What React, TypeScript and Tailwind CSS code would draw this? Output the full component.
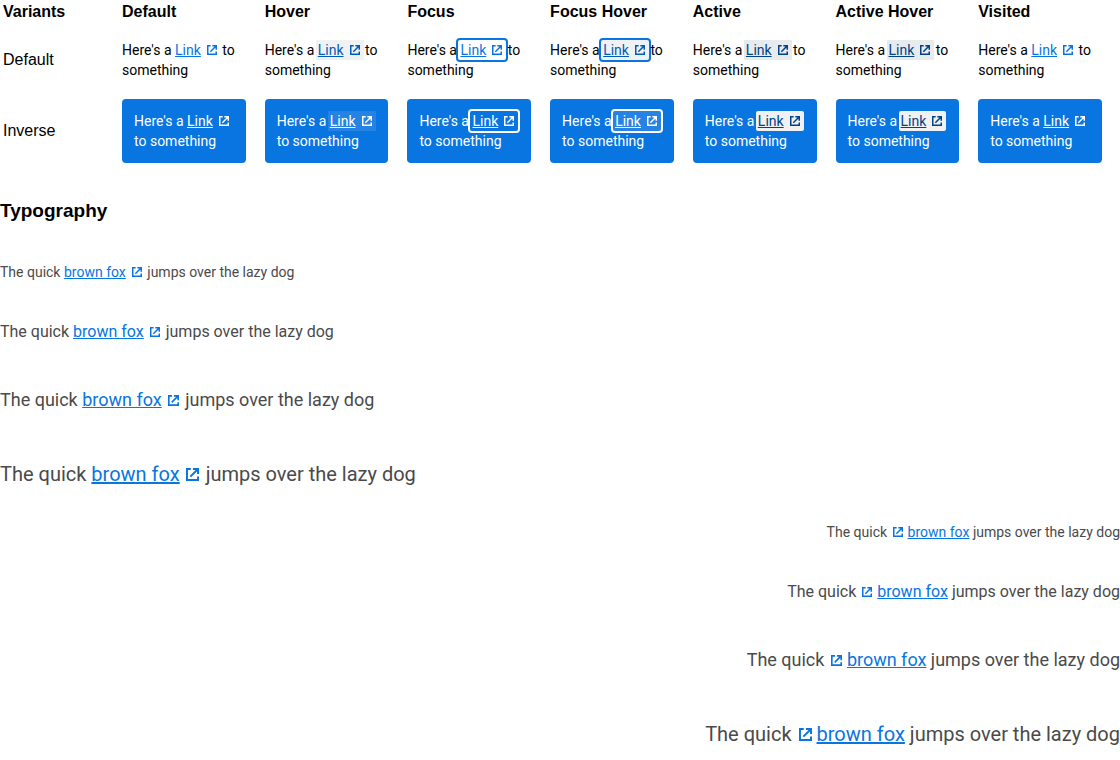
import clsx from 'clsx'

const states = [
  {
    name: 'Default',
    link: 'text-[#0875e1]',
    inverse: 'text-white',
  },
  {
    name: 'Hover',
    link: 'bg-[#f0f1f2] text-[#005cb9]',
    inverse: 'bg-[#2683e4] text-white',
  },
  {
    name: 'Focus',
    link: 'rounded-xs text-[#0875e1] ring-2 ring-[#0875e1]',
    inverse: 'rounded-xs text-white ring-2 ring-white',
  },
  {
    name: 'Focus Hover',
    link: 'rounded-xs bg-[#f0f1f2] text-[#005cb9] ring-2 ring-[#0875e1]',
    inverse: 'rounded-xs bg-[#2683e4] text-white ring-2 ring-white',
  },
  {
    name: 'Active',
    link: 'bg-[#e8ebed] text-[#004387]',
    inverse: 'rounded-xs bg-[#f0f1f2] text-[#004387]',
  },
  {
    name: 'Active Hover',
    link: 'bg-[#e8ebed] text-[#004387]',
    inverse: 'rounded-xs bg-[#f0f1f2] text-[#004387]',
  },
  {
    name: 'Visited',
    link: 'text-[#0875e1]',
    inverse: 'text-white',
  },
]

const sizes = [
  { name: 'small', text: 'text-[14px] leading-[20px]', gap: '', link: '', icon: 'size-[10px]' },
  { name: 'medium', text: 'text-[16px] leading-[24px]', gap: 'mt-[38px]', link: '', icon: 'size-[10px]' },
  { name: 'large', text: 'text-[18px] leading-[28px]', gap: 'mt-[42px]', link: '', icon: 'size-[11px]' },
  { name: 'xlarge', text: 'text-[20px] leading-[28px]', gap: 'mt-[46px]', link: 'decoration-2', icon: 'size-[13px]' },
]

function ExternalIcon({ className }: { className?: string }) {
  return (
    <svg
      viewBox="0 0 12 12"
      fill="none"
      stroke="currentColor"
      strokeWidth="1.8"
      aria-hidden="true"
      className={clsx('inline-block align-baseline', className)}
    >
      <path d="M4.4 0.9H0.9V11.1H11.1V7.8" />
      <path d="M6.4 0.9H11.1V5.6M11.1 0.9L4 8" />
    </svg>
  )
}

function ExternalLink({
  children,
  className,
  icon = 'size-[10px]',
  iconFirst = false,
}: {
  children: string
  className?: string
  icon?: string
  iconFirst?: boolean
}) {
  return (
    <a href="#" className={clsx('-mx-0.5 inline-block px-0.5 whitespace-nowrap underline', className)}>
      {iconFirst && <ExternalIcon className={clsx('mr-[5px] ml-0.5', icon)} />}
      {children}
      {!iconFirst && <ExternalIcon className={clsx('mr-0.5 ml-[6px]', icon)} />}
    </a>
  )
}

function VariantsTable() {
  return (
    <table className="w-full table-fixed border-separate border-spacing-[2px] font-['Liberation_Sans',sans-serif] text-[16px] leading-[18px]">
      <thead>
        <tr className="text-left">
          <th className="w-[117px] p-px pb-4">Variants</th>
          {states.map((state) => (
            <th key={state.name} className="p-px pr-4 pb-4">
              {state.name}
            </th>
          ))}
        </tr>
      </thead>
      <tbody>
        <tr>
          <td className="p-px pb-4">Default</td>
          {states.map((state) => (
            <td key={state.name} className="p-px pr-4 pb-4">
              <p className="font-[Roboto,sans-serif] text-[14px] leading-[20px]">
                Here's a <ExternalLink className={state.link}>Link</ExternalLink> to something
              </p>
            </td>
          ))}
        </tr>
        <tr>
          <td className="p-px pb-4">Inverse</td>
          {states.map((state) => (
            <td key={state.name} className="p-px pr-4 pb-4">
              <p className="rounded bg-[#0875e1] p-3 font-[Roboto,sans-serif] text-[14px] leading-[20px] text-white">
                Here's a <ExternalLink className={state.inverse}>Link</ExternalLink> to something
              </p>
            </td>
          ))}
        </tr>
      </tbody>
    </table>
  )
}

function TypeSamples({ iconFirst = false, className }: { iconFirst?: boolean; className?: string }) {
  return (
    <div className={clsx('font-[Roboto,sans-serif] text-[#4a4a4a]', className)}>
      {sizes.map((size) => (
        <p key={size.name} className={clsx(size.text, size.gap)}>
          The quick{' '}
          <ExternalLink
            className={clsx('text-[#0875e1]', size.link)}
            icon={size.icon}
            iconFirst={iconFirst}
          >
            brown fox
          </ExternalLink>{' '}
          jumps over the lazy dog
        </p>
      ))}
    </div>
  )
}

export default function App() {
  return (
    <main className="bg-white text-black">
      <VariantsTable />
      <h3 className="mt-[19px] font-['Liberation_Sans',sans-serif] text-[19px] leading-[22px] font-bold">
        Typography
      </h3>
      <TypeSamples className="mt-[40px]" />
      <TypeSamples className="mt-[34px] text-right" iconFirst />
    </main>
  )
}
